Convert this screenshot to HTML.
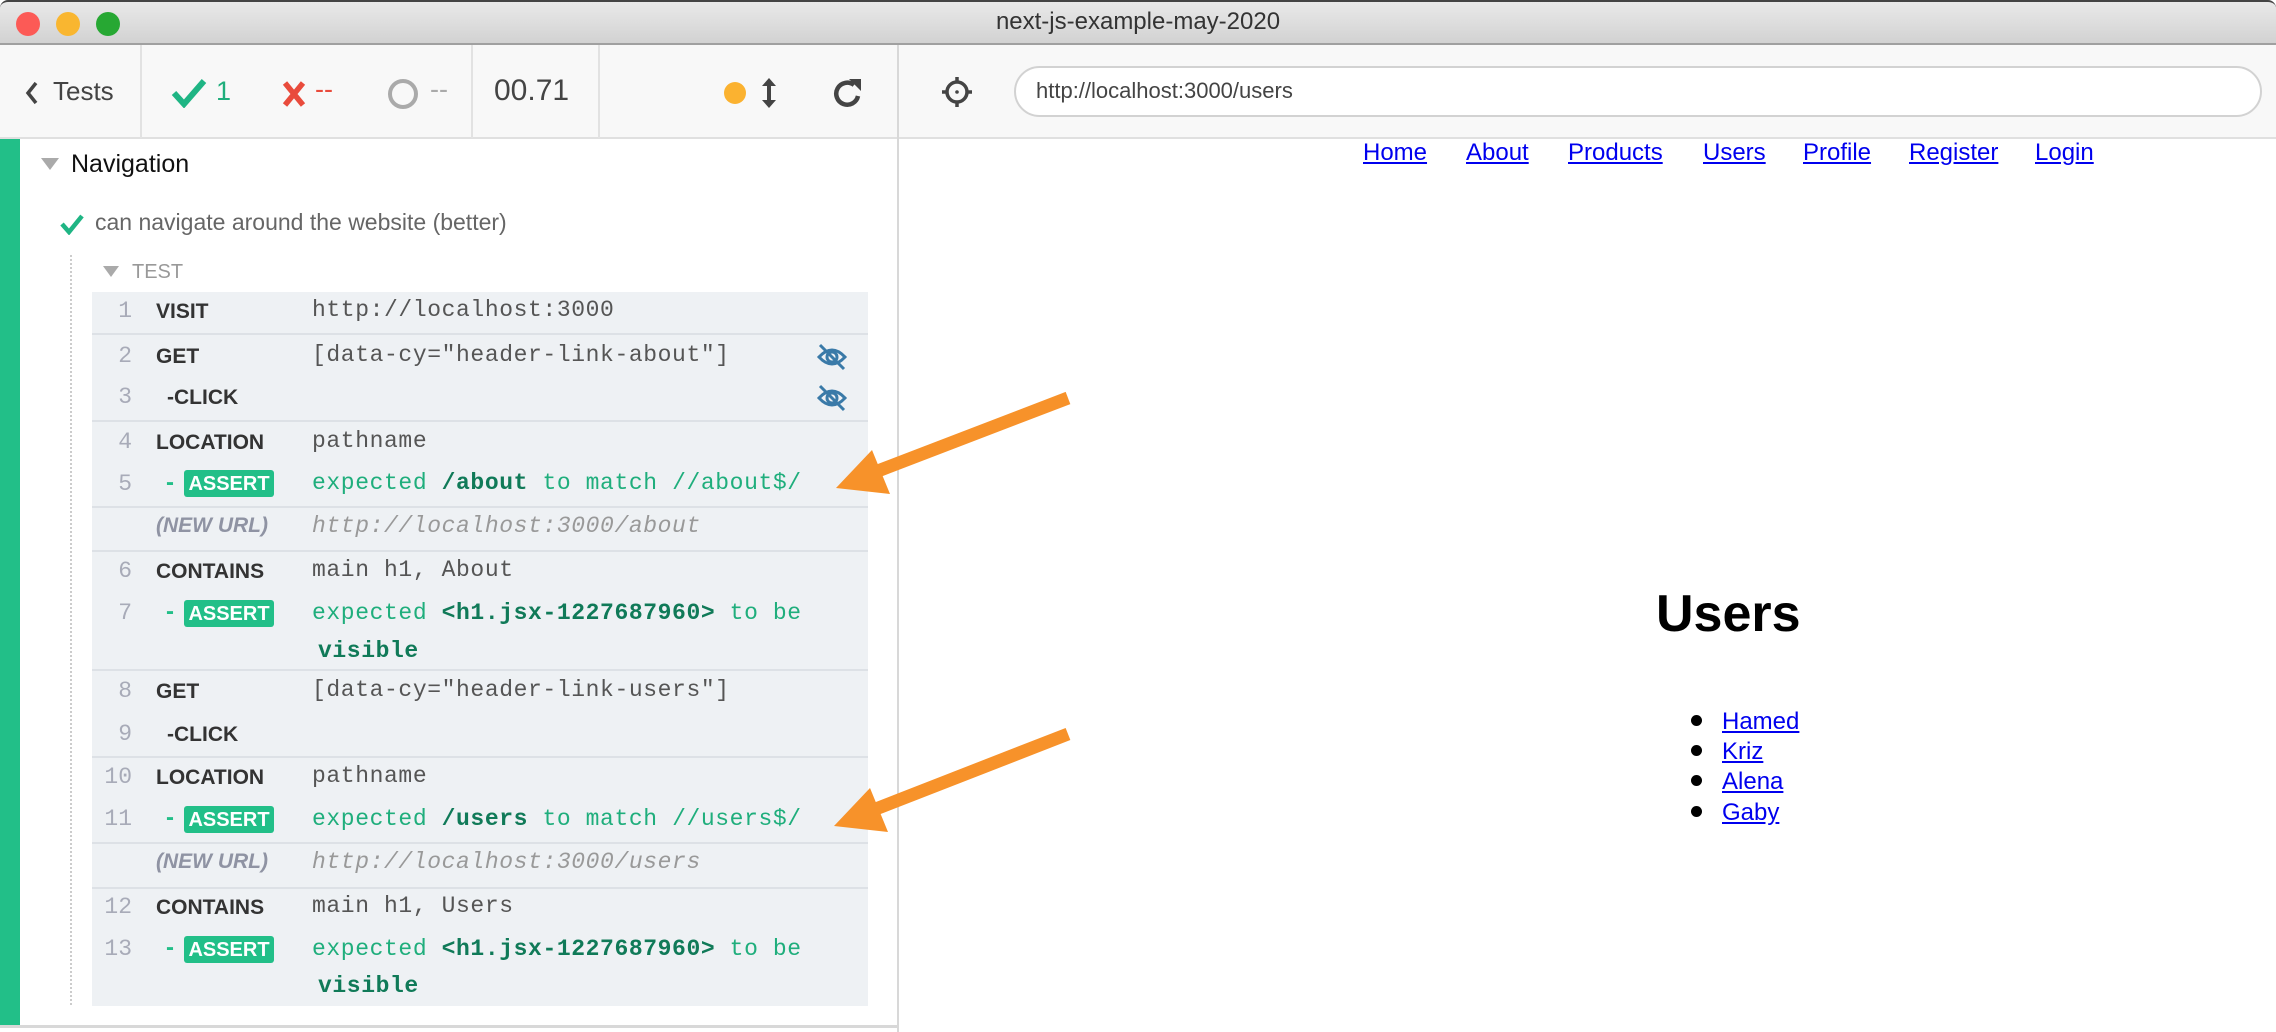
<!DOCTYPE html>
<html><head><meta charset="utf-8"><style>
*{margin:0;padding:0;box-sizing:border-box}
body{width:2276px;height:1032px;overflow:hidden;background:#fff;position:relative;font-family:"Liberation Sans",sans-serif}
.a{position:absolute;white-space:nowrap}
.mono{font-family:"Liberation Mono",monospace;font-size:23px;letter-spacing:0.6px}
.num{color:#a8abb8;width:40px;text-align:right;left:92px;font-family:"Liberation Mono",monospace;font-size:23px}
.cmd{left:156px;font-weight:bold;color:#333;font-size:21px;font-family:"Liberation Sans",sans-serif}
.msg{left:312px;color:#555}
.g{color:#1fae7c}
.gb{color:#107a58;font-weight:bold}
.sep{position:absolute;left:92px;width:776px;height:2px;background:#dde1e6}
.badge{position:absolute;left:184px;width:90px;height:27px;background:#22bf88;border-radius:3px;color:#fff;font-weight:bold;font-size:20px;text-align:center;line-height:28px}
.dash{left:166px;color:#22bf88;font-weight:bold;font-size:24px}
.nav a{position:absolute;top:139px;color:#0000ee;text-decoration:underline;font-size:24px}
</style></head><body>
<div class="a" style="left:0;top:0;width:2276px;height:45px;background:linear-gradient(#e9e9e9,#d2d2d2);border-top:2px solid #444;border-bottom:2px solid #a0a0a0;border-radius:8px 8px 0 0"></div>
<div class="a" style="left:16px;top:12px;width:24px;height:24px;border-radius:50%;background:#fc5a56"></div>
<div class="a" style="left:56px;top:12px;width:24px;height:24px;border-radius:50%;background:#f9b630"></div>
<div class="a" style="left:96px;top:12px;width:24px;height:24px;border-radius:50%;background:#27a833"></div>
<div class="a" style="left:0;width:2276px;top:8px;text-align:center;font-size:24px;color:#333">next-js-example-may-2020</div>
<div class="a" style="left:0;top:45px;width:2276px;height:94px;background:#f8f8f8;border-bottom:2px solid #e0e0e0"></div>
<div class="a" style="left:140px;top:45px;width:2px;height:93px;background:#e2e2e2"></div>
<div class="a" style="left:471px;top:45px;width:2px;height:93px;background:#e2e2e2"></div>
<div class="a" style="left:598px;top:45px;width:2px;height:93px;background:#e2e2e2"></div>
<div class="a" style="left:897px;top:45px;width:2px;height:987px;background:#d8d8d8"></div>
<svg class="a" style="left:24px;top:80px" width="16" height="26"><path d="M12 3 L4 13 L12 23" stroke="#444" stroke-width="3.5" fill="none"/></svg>
<div class="a" style="left:53px;top:76px;font-size:26px;color:#444">Tests</div>
<svg class="a" style="left:171px;top:78px" width="36" height="30"><path d="M3 15 L13 26 L33 3" stroke="#1fb584" stroke-width="6" fill="none"/></svg>
<div class="a" style="left:216px;top:76px;font-size:27px;color:#1fae7c">1</div>
<svg class="a" style="left:282px;top:80px" width="24" height="28"><path d="M3 3 L21 25 M21 3 L3 25" stroke="#e94b3c" stroke-width="5.5"/></svg>
<div class="a" style="left:315px;top:74px;font-size:27px;color:#e94b3c">--</div>
<svg class="a" style="left:386px;top:77px" width="34" height="34"><circle cx="17" cy="17" r="13" stroke="#aaa" stroke-width="4" fill="none"/></svg>
<div class="a" style="left:430px;top:74px;font-size:27px;color:#aaa">--</div>
<div class="a" style="left:494px;top:74px;font-size:30px;color:#444">00.71</div>
<div class="a" style="left:724px;top:82px;width:22px;height:22px;border-radius:50%;background:#fbb230"></div>
<svg class="a" style="left:760px;top:77px" width="18" height="32"><path d="M9 5 V27" stroke="#444" stroke-width="4"/><path d="M2 9 L9 1 L16 9Z M2 23 L9 31 L16 23Z" fill="#444"/></svg>
<svg class="a" style="left:833px;top:78px" width="32" height="32"><path d="M25 18 A11 11 0 1 1 21 7" stroke="#444" stroke-width="4.5" fill="none"/><path d="M16 1 L28 1 L28 13Z" fill="#444"/></svg>
<svg class="a" style="left:941px;top:76px" width="32" height="32"><circle cx="16" cy="16" r="10" stroke="#444" stroke-width="3.5" fill="none"/><path d="M16 1V7 M16 25V31 M1 16H7 M25 16H31" stroke="#444" stroke-width="3.5"/><circle cx="16" cy="16" r="1.8" fill="#444"/></svg>
<div class="a" style="left:1014px;top:66px;width:1248px;height:51px;border:2px solid #d2d2d2;border-radius:26px;background:#fff"></div>
<div class="a" style="left:1036px;top:78px;font-size:22px;color:#444">http://localhost:3000/users</div>
<div class="a" style="left:0;top:139px;width:20px;height:888px;background:#22bf88"></div>
<div class="a" style="left:0;top:1025px;width:898px;height:3px;background:#d8d8d8"></div>
<svg class="a" style="left:41px;top:158px" width="18" height="12"><path d="M0 0H18L9 12Z" fill="#aaa"/></svg>
<div class="a" style="left:71px;top:150px;font-size:25px;color:#111">Navigation</div>
<svg class="a" style="left:60px;top:213px" width="24" height="22"><path d="M2 11 L9 19 L22 3" stroke="#1fb584" stroke-width="4.5" fill="none"/></svg>
<div class="a" style="left:95px;top:209px;font-size:23px;color:#666">can navigate around the website (better)</div>
<div class="a" style="left:70px;top:255px;width:0;height:750px;border-left:2px dotted #ccc"></div>
<svg class="a" style="left:103px;top:266px" width="16" height="11"><path d="M0 0H16L8 11Z" fill="#aaa"/></svg>
<div class="a" style="left:132px;top:261px;font-size:20px;color:#999">TEST</div>
<div class="a" style="left:92px;top:292px;width:776px;height:714px;background:#eef1f4"></div>
<div class="sep" style="top:333px"></div>
<div class="sep" style="top:420px"></div>
<div class="sep" style="top:506px"></div>
<div class="sep" style="top:550px"></div>
<div class="sep" style="top:669px"></div>
<div class="sep" style="top:756px"></div>
<div class="sep" style="top:842px"></div>
<div class="sep" style="top:887px"></div>

<div class="a num" style="top:298px">1</div><div class="a cmd" style="top:300px">VISIT</div><div class="a mono msg" style="top:297px">http://localhost:3000</div>
<div class="a num" style="top:343px">2</div><div class="a cmd" style="top:345px">GET</div><div class="a mono msg" style="top:342px">[data-cy="header-link-about"]</div>
<div class="a num" style="top:384px">3</div><div class="a cmd" style="top:386px;left:167px">-CLICK</div>
<div class="a num" style="top:429px">4</div><div class="a cmd" style="top:431px">LOCATION</div><div class="a mono msg" style="top:428px">pathname</div>
<div class="a num" style="top:471px">5</div><div class="a dash" style="top:469px">-</div><div class="badge" style="top:470px">ASSERT</div><div class="a mono msg g" style="top:470px">expected <span class="gb">/about</span> to match //about$/</div>
<div class="a" style="left:156px;top:514px;font-size:21px;color:#8f93a3;font-style:italic;font-weight:bold">(NEW URL)</div><div class="a mono msg" style="top:513px;color:#999;font-style:italic">http://localhost:3000/about</div>
<div class="a num" style="top:558px">6</div><div class="a cmd" style="top:560px">CONTAINS</div><div class="a mono msg" style="top:557px">main h1, About</div>
<div class="a num" style="top:600px">7</div><div class="a dash" style="top:598px">-</div><div class="badge" style="top:600px">ASSERT</div><div class="a mono msg g" style="top:600px">expected <span class="gb">&lt;h1.jsx-1227687960&gt;</span> to be</div>
<div class="a mono msg gb" style="top:638px;left:318px">visible</div>
<div class="a num" style="top:678px">8</div><div class="a cmd" style="top:680px">GET</div><div class="a mono msg" style="top:677px">[data-cy="header-link-users"]</div>
<div class="a num" style="top:721px">9</div><div class="a cmd" style="top:723px;left:167px">-CLICK</div>
<div class="a num" style="top:764px">10</div><div class="a cmd" style="top:766px">LOCATION</div><div class="a mono msg" style="top:763px">pathname</div>
<div class="a num" style="top:806px">11</div><div class="a dash" style="top:804px">-</div><div class="badge" style="top:806px">ASSERT</div><div class="a mono msg g" style="top:806px">expected <span class="gb">/users</span> to match //users$/</div>
<div class="a" style="left:156px;top:850px;font-size:21px;color:#8f93a3;font-style:italic;font-weight:bold">(NEW URL)</div><div class="a mono msg" style="top:849px;color:#999;font-style:italic">http://localhost:3000/users</div>
<div class="a num" style="top:894px">12</div><div class="a cmd" style="top:896px">CONTAINS</div><div class="a mono msg" style="top:893px">main h1, Users</div>
<div class="a num" style="top:936px">13</div><div class="a dash" style="top:934px">-</div><div class="badge" style="top:936px">ASSERT</div><div class="a mono msg g" style="top:936px">expected <span class="gb">&lt;h1.jsx-1227687960&gt;</span> to be</div>
<div class="a mono msg gb" style="top:973px;left:318px">visible</div>
<svg class="a" style="left:816px;top:343px" width="32" height="28"><path d="M3 14 Q16 0 29 14 Q16 28 3 14Z" stroke="#3a7aa8" stroke-width="3" fill="none"/><circle cx="16" cy="14" r="5" stroke="#3a7aa8" stroke-width="3" fill="none"/><path d="M4 2 L28 26" stroke="#3a7aa8" stroke-width="3"/></svg>
<svg class="a" style="left:816px;top:384px" width="32" height="28"><path d="M3 14 Q16 0 29 14 Q16 28 3 14Z" stroke="#3a7aa8" stroke-width="3" fill="none"/><circle cx="16" cy="14" r="5" stroke="#3a7aa8" stroke-width="3" fill="none"/><path d="M4 2 L28 26" stroke="#3a7aa8" stroke-width="3"/></svg>
<div class="nav">
<a style="left:1363px">Home</a><a style="left:1466px">About</a><a style="left:1568px">Products</a><a style="left:1703px">Users</a><a style="left:1803px">Profile</a><a style="left:1909px">Register</a><a style="left:2035px">Login</a>
</div>
<div class="a" style="left:1656px;top:584px;font-size:52px;font-weight:bold;color:#000">Users</div>
<div class="a" style="left:1691px;top:715px;width:11px;height:11px;border-radius:50%;background:#000"></div>
<div class="a" style="left:1691px;top:745px;width:11px;height:11px;border-radius:50%;background:#000"></div>
<div class="a" style="left:1691px;top:775px;width:11px;height:11px;border-radius:50%;background:#000"></div>
<div class="a" style="left:1691px;top:806px;width:11px;height:11px;border-radius:50%;background:#000"></div>
<div class="nav"><a style="left:1722px;top:708px">Hamed</a><a style="left:1722px;top:738px">Kriz</a><a style="left:1722px;top:768px">Alena</a><a style="left:1722px;top:799px">Gaby</a></div>
<svg class="a" style="left:0;top:0" width="2276" height="1032">
<path d="M1068 398 L870 474" stroke="#f7922a" stroke-width="13"/>
<path d="M836 488 L872 450 L890 494Z" fill="#f7922a"/>
<path d="M1068 734 L868 812" stroke="#f7922a" stroke-width="13"/>
<path d="M834 826 L870 788 L888 832Z" fill="#f7922a"/>
</svg>
</body></html>
